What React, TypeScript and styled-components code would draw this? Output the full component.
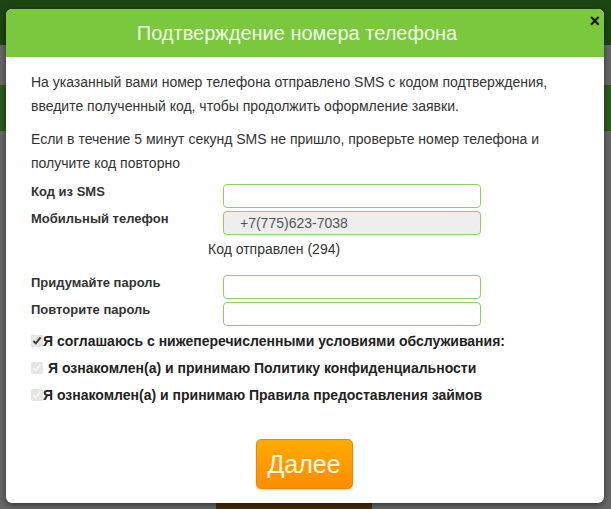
import React from 'react';
import styled, { createGlobalStyle } from 'styled-components';

const GlobalStyle = createGlobalStyle`
  html, body {
    margin: 0;
    padding: 0;
    width: 611px;
    height: 509px;
    overflow: hidden;
    font-family: "Liberation Sans", Arial, sans-serif;
  }
`;

const Page = styled.div`
  position: relative;
  width: 611px;
  height: 509px;
  background: #676767;
  overflow: hidden;
`;

const TopStrip = styled.div`
  height: 45px;
  background: #1d4514;
`;

const MidStrip = styled.div`
  margin-top: 40px;
  height: 46px;
  background: #2b5a1e;
`;

const BottomPatch = styled.div`
  position: absolute;
  left: 216px;
  bottom: 0;
  width: 156px;
  height: 8px;
  background: #4a2e08;
`;

const Overlay = styled.div`
  position: absolute;
  inset: 0;
  padding: 9px 7px 0 6px;
`;

const Modal = styled.div`
  position: relative;
  width: 598px;
  height: 494px;
  background: #fff;
  border-radius: 6px;
  overflow: hidden;
  box-shadow: 0 2px 6px rgba(0, 0, 0, 0.5);
`;

const Header = styled.div`
  height: 48px;
  background: #79c83d;
  display: flex;
  align-items: center;
  justify-content: center;
  padding-right: 16px;
  color: #f3ffe6;
  font-size: 20px;
`;

const Close = styled.button`
  position: absolute;
  top: 2px;
  right: 4px;
  border: none;
  background: none;
  padding: 0;
  font-size: 18px;
  font-weight: bold;
  color: #111;
  cursor: pointer;
  font-family: "Liberation Sans", Arial, sans-serif;
  line-height: 20px;
`;

const Body = styled.div`
  padding: 13px 25px 0 25px;
  color: #333;
  font-size: 14px;
`;

const Para = styled.p`
  margin: 0 0 9px;
  line-height: 24px;
`;

const Form = styled.div`
  display: grid;
  grid-template-columns: 192px 258px;
  row-gap: 3px;
  margin-top: 7px;
`;

const Label = styled.label`
  font-weight: bold;
  font-size: 13px;
  color: #333;
  line-height: 16px;
`;

const Input = styled.input<{ $readOnly?: boolean }>`
  box-sizing: border-box;
  height: 24px;
  width: 258px;
  border: 1px solid #8fd35c;
  border-radius: 4px;
  background: ${(p) => (p.$readOnly ? '#eeeeee' : '#fff')};
  color: #555;
  font-family: "Liberation Sans", Arial, sans-serif;
  font-size: 14px;
  padding: 0 16px;
  outline: none;
`;

const SentNote = styled.div`
  grid-column: 1 / span 2;
  padding-left: 177px;
  line-height: 22px;
  margin-bottom: 12px;
  font-size: 14px;
  color: #333;
`;

const Checks = styled.div`
  display: flex;
  flex-direction: column;
  gap: 9px;
  margin-top: 6px;
`;

const CheckRow = styled.label<{ $dim?: boolean; $gap?: number }>`
  display: flex;
  align-items: center;
  gap: ${(p) => p.$gap ?? 0}px;
  font-weight: bold;
  font-size: 14px;
  color: #222;
  line-height: 18px;

  input {
    margin: 0;
    width: 12px;
    height: 12px;
    accent-color: #e6e6e6;
    opacity: ${(p) => (p.$dim ? 0.55 : 1)};
  }
`;

const Footer = styled.div`
  display: flex;
  justify-content: center;
  margin-top: 35px;
  padding-right: 2px;
`;

const NextButton = styled.button`
  width: 97px;
  height: 50px;
  border: 1px solid #e48a00;
  border-radius: 5px;
  background: linear-gradient(#ffab00, #ff8c00);
  color: #fff8e6;
  font-family: "Liberation Sans", Arial, sans-serif;
  font-size: 25px;
  cursor: pointer;
  box-shadow: 0 1px 2px rgba(0, 0, 0, 0.2);
`;

export default function App() {
  return (
    <>
      <GlobalStyle />
      <Page>
        <TopStrip />
        <MidStrip />
        <BottomPatch />
        <Overlay>
          <Modal>
            <Header>Подтверждение номера телефона</Header>
            <Close type="button">×</Close>
            <Body>
              <Para>
                На указанный вами номер телефона отправлено SMS с кодом подтверждения,
                введите полученный код, чтобы продолжить оформление заявки.
              </Para>
              <Para>
                Если в течение 5 минут секунд SMS не пришло, проверьте номер телефона и
                получите код повторно
              </Para>
              <Form>
                <Label>Код из SMS</Label>
                <Input type="text" />
                <Label>Мобильный телефон</Label>
                <Input type="text" $readOnly readOnly value="+7(775)623-7038" />
                <SentNote>Код отправлен (294)</SentNote>
                <Label>Придумайте пароль</Label>
                <Input type="password" />
                <Label>Повторите пароль</Label>
                <Input type="password" />
              </Form>
              <Checks>
                <CheckRow>
                  <input type="checkbox" defaultChecked />
                  Я соглашаюсь с нижеперечисленными условиями обслуживания:
                </CheckRow>
                <CheckRow $dim $gap={5}>
                  <input type="checkbox" defaultChecked disabled />
                  Я ознакомлен(а) и принимаю Политику конфиденциальности
                </CheckRow>
                <CheckRow $dim>
                  <input type="checkbox" defaultChecked disabled />
                  Я ознакомлен(а) и принимаю Правила предоставления займов
                </CheckRow>
              </Checks>
              <Footer>
                <NextButton type="button">Далее</NextButton>
              </Footer>
            </Body>
          </Modal>
        </Overlay>
      </Page>
    </>
  );
}
